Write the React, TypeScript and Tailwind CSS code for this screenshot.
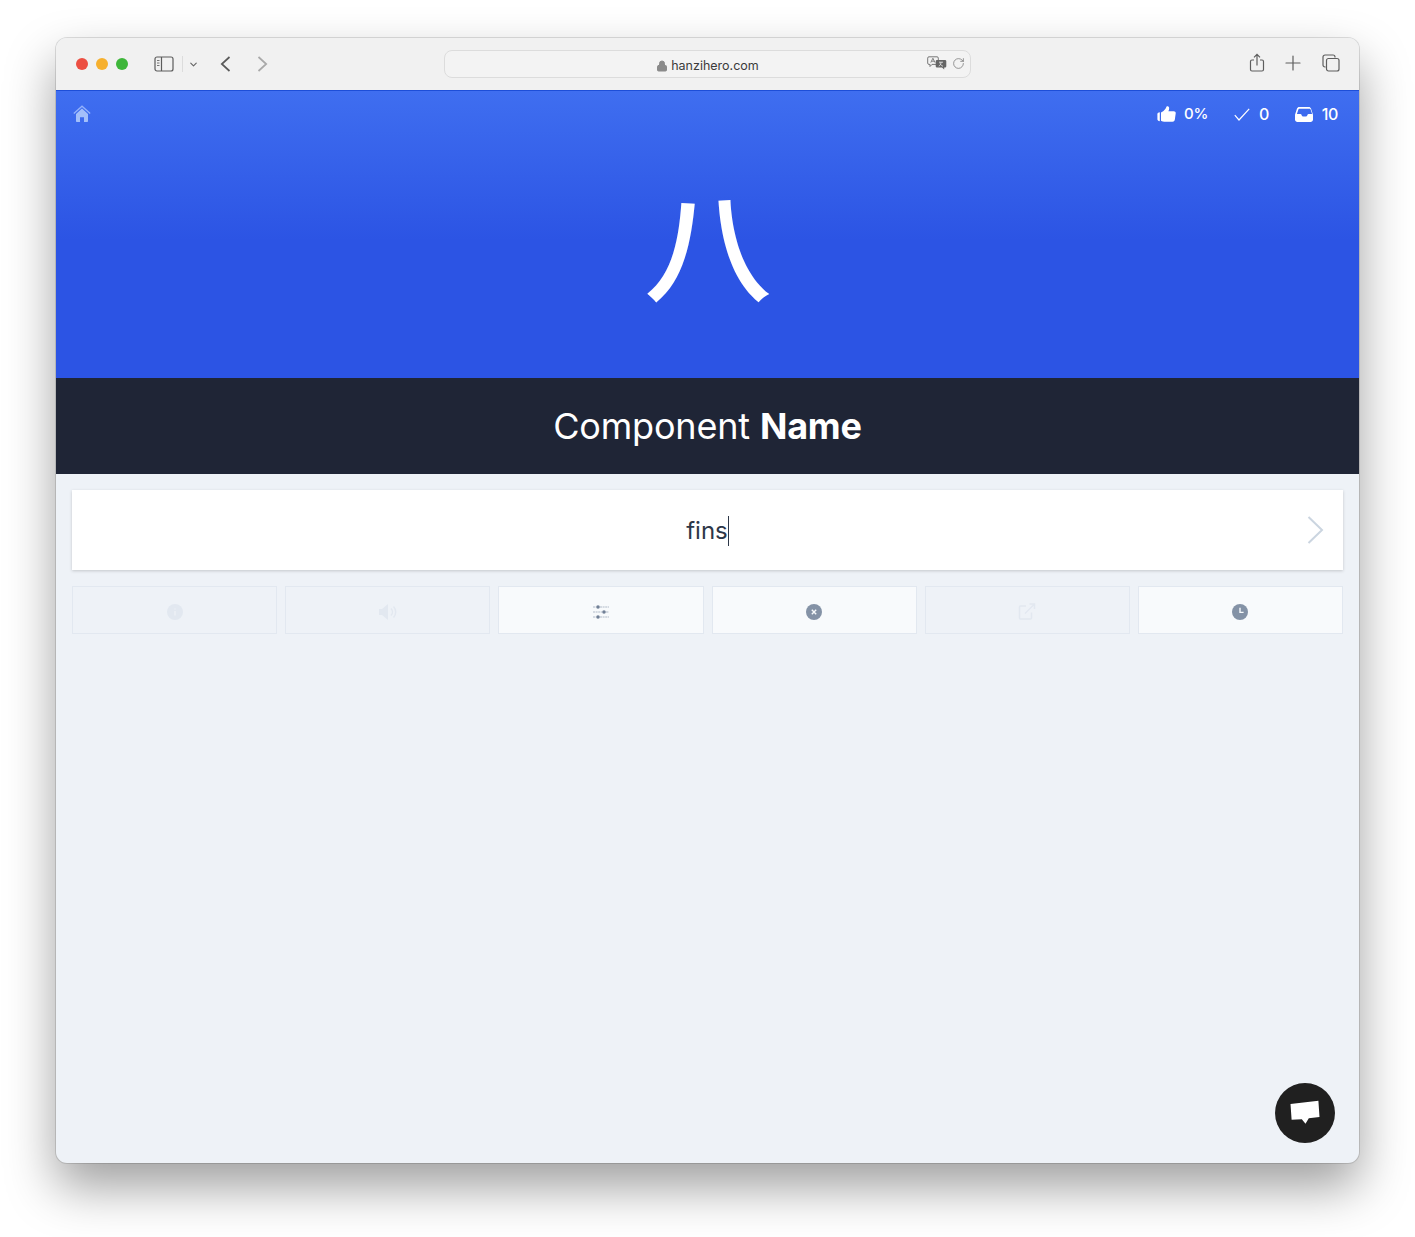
import { ChevronDown, Plus, RotateCw, Lock } from 'lucide-react';

const SANS = "font-['Inter','Noto_Sans_CJK_SC',sans-serif]";

function SidebarIcon() {
  return (
    <svg width="20" height="16" viewBox="0 0 20 16" fill="none" stroke="#5c5c5c" strokeWidth="1.2">
      <rect x="1" y="1" width="18" height="14" rx="2" />
      <path d="M7.5 1v14" />
      <path d="M3 4.5h2.5M3 7h2.5M3 9.5h2.5" strokeWidth="1.1" stroke="#777" />
    </svg>
  );
}

function NavChevron({ dir, color }: { dir: 'left' | 'right'; color: string }) {
  return (
    <svg width="11" height="16" viewBox="0 0 11 16" fill="none" stroke={color} strokeWidth="1.7">
      <path d={dir === 'left' ? 'M9.500 1 1.800 8l7.700 7' : 'M1.500 1l7.700 7-7.700 7'} />
    </svg>
  );
}

function ShareIcon() {
  return (
    <svg width="16" height="20" viewBox="0 0 16 20" fill="none" stroke="#5e5e5e" strokeWidth="1.2">
      <path d="M5 7H3a1.5 1.5 0 0 0-1.5 1.5v8A1.5 1.5 0 0 0 3 18h10a1.5 1.5 0 0 0 1.5-1.5v-8A1.5 1.5 0 0 0 13 7h-2" />
      <path d="M8 12.5V1.5M5 4.3l3-3 3 3" />
    </svg>
  );
}

function TabsIcon() {
  return (
    <svg width="18" height="18" viewBox="0 0 18 18" fill="none" stroke="#5e5e5e" strokeWidth="1.2">
      <path d="M3.6 13H3a2 2 0 0 1-2-2V3a2 2 0 0 1 2-2h8a2 2 0 0 1 2 2v.6" />
      <rect x="4.5" y="4.5" width="12.5" height="12.5" rx="2" />
    </svg>
  );
}

function TranslateIcon() {
  return (
    <svg width="20" height="14" viewBox="0 0 20 14">
      <path d="M2 .8h8a1.3 1.3 0 0 1 1.3 1.3v5A1.3 1.3 0 0 1 10 8.400H5L3 10.500V8.400H2A1.300 1.300 0 0 1 .7 7.100v-5A1.300 1.300 0 0 1 2 .8z" fill="none" stroke="#777" strokeWidth="1" />
      <path d="M3.800 6.600 5.900 2.200 8 6.600M4.600 5.200h2.600" fill="none" stroke="#777" strokeWidth="0.9" />
      <path d="M10 4h8a1.300 1.300 0 0 1 1.300 1.300v5a1.300 1.300 0 0 1-1.300 1.300h-.8v2l-2.200-2h-5a1.300 1.300 0 0 1-1.300-1.300v-5A1.300 1.300 0 0 1 10 4z" fill="#666" />
      <path d="M12 6.200h4M14 6.200c0 2-1 3.400-2.200 3.900M13 7.500c.6 1.300 1.800 2.300 3 2.700" fill="none" stroke="#f0f0f0" strokeWidth="0.8" />
    </svg>
  );
}

function HomeIcon() {
  return (
    <svg width="18" height="18" viewBox="0 0 18 18">
      <path d="M.8 8.600 9 1.200l8.200 7.400" fill="none" stroke="#93b1fb" strokeWidth="1.300" />
      <path d="M3 9 9 3.600 15 9v7.200a.8.8 0 0 1-.8.8h-3.200v-4.800H7V17H3.800a.8.8 0 0 1-.8-.8z" fill="#a3bffa" />
    </svg>
  );
}

function ThumbIcon() {
  return (
    <svg width="19" height="16" viewBox="0 0 19 16" fill="#fff">
      <path d="M.4 8.200c0-.9.600-1.500 1.400-1.700l1-.2v8.900l-1-.2C1 14.800.4 14.200.4 13.300z" />
      <path d="M4 6.400c1.700-.7 3.500-2.200 4.500-3.700.6-.9.700-1.600 1.100-2.200.6-.7 2-.4 2.400.8.400 1.200 0 2.700-.6 4h5.400c1.300 0 2.100 1 1.900 2.200l-.9 6.200c-.2 1.200-1.100 2-2.300 2H8.300c-1.700 0-3-.4-4.300-1z" />
    </svg>
  );
}

function CheckIcon() {
  return (
    <svg width="16" height="13" viewBox="0 0 16 13" fill="none" stroke="#fff" strokeWidth="1.200">
      <path d="M.8 7.200 5 12 15.200.8" />
    </svg>
  );
}

function InboxIcon() {
  return (
    <svg width="18" height="15" viewBox="0 0 18 15" fill="#fff">
      <path fillRule="evenodd" d="M4.200 0h9.600c1 0 1.800.6 2.200 1.500l1.600 5c.2.500.4 1.100.4 1.700v4.300c0 1.400-1.100 2.500-2.500 2.500h-13C1.100 15 0 13.900 0 12.500V8.200c0-.6.100-1.200.4-1.700l1.600-5C2.400.6 3.200 0 4.200 0zm0 1.700c-.3 0-.6.200-.7.500L1.900 7.100h3.500c.5 0 .9.300 1.100.7l.4.900c.2.400.6.700 1.100.7h3c.5 0 .9-.3 1.100-.7l.4-.9c.2-.4.600-.7 1.100-.7h3.500l-1.600-4.900c-.1-.3-.4-.5-.7-.5z" />
    </svg>
  );
}

function InfoIcon() {
  return (
    <svg width="16" height="16" viewBox="0 0 16 16">
      <circle cx="8" cy="8" r="8" fill="#e2e8f0" />
      <path d="M8 7v4.500M8 4.500v1" stroke="#edf0f5" strokeWidth="1.500" />
    </svg>
  );
}

function VolumeIcon() {
  return (
    <svg width="20" height="18" viewBox="0 0 20 18">
      <path d="M1 6h3L10 1v16l-6-5H1z" fill="#e2e8f0" />
      <path d="M13 5.500a5 5 0 0 1 0 7M15.500 3.500a8 8 0 0 1 0 11" fill="none" stroke="#e2e8f0" strokeWidth="1.500" />
    </svg>
  );
}

function SlidersIcon() {
  return (
    <svg width="16" height="14" viewBox="0 0 16 14" stroke="#8492a6" strokeWidth="1.200">
      <path d="M0 2h3M7 2h9M0 7h9M13 7h3M0 12h3M7 12h9" strokeOpacity="0.6" strokeDasharray="2 .6" />
      <circle cx="5" cy="2" r="1.800" fill="#718096" stroke="none" />
      <circle cx="11" cy="7" r="1.800" fill="#718096" stroke="none" />
      <circle cx="5" cy="12" r="1.800" fill="#718096" stroke="none" />
    </svg>
  );
}

function CloseCircleIcon() {
  return (
    <svg width="16" height="16" viewBox="0 0 16 16">
      <circle cx="8" cy="8" r="8" fill="#8492a6" />
      <path d="M5.800 5.800l4.400 4.400M10.200 5.800l-4.400 4.400" stroke="#f7fafc" strokeWidth="1.400" />
    </svg>
  );
}

function ExternalIcon() {
  return (
    <svg width="18" height="17" viewBox="0 0 18 17" fill="none" stroke="#e2e8f0" strokeWidth="1.500">
      <path d="M8 3H2.500A1 1 0 0 0 1.500 4v11a1 1 0 0 0 1 1h10a1 1 0 0 0 1-1V9.500" />
      <path d="M7 10.500 16.500 1M11.500 1h5v5" />
    </svg>
  );
}

function ClockIcon() {
  return (
    <svg width="16" height="16" viewBox="0 0 16 16">
      <circle cx="8" cy="8" r="8" fill="#8492a6" />
      <path d="M8 3.800V8.400h3.600" fill="none" stroke="#f7fafc" strokeWidth="1.400" />
    </svg>
  );
}

function ChatIcon() {
  return (
    <svg width="30" height="26" viewBox="0 0 30 26" fill="#fff">
      <path d="M.5 4 28.400.8 29.500 17l-10.700 1.300-3.300 5.400-3.700-4.400-10.200.500z" />
    </svg>
  );
}

const actions = [
  { icon: <InfoIcon />, active: false },
  { icon: <VolumeIcon />, active: false },
  { icon: <SlidersIcon />, active: true },
  { icon: <CloseCircleIcon />, active: true },
  { icon: <ExternalIcon />, active: false },
  { icon: <ClockIcon />, active: true },
];

export default function App() {
  return (
    <div className={`h-[1237px] bg-white px-[56px] pt-[38px] ${SANS}`}>
      <div className="relative flex h-[1125px] flex-col overflow-hidden rounded-[11px] bg-[#eef2f7] shadow-[0_0_0_1px_rgba(0,0,0,0.12),0_24px_50px_rgba(0,0,0,0.38)]">
        {/* safari toolbar */}
        <div className="flex h-[53px] shrink-0 items-center border-b border-[#1d4ed8] bg-[#f1f1f1] pl-5 pr-[19px]">
          <div className="flex w-[52px] items-center gap-2">
            <span className="size-3 rounded-full bg-[#ec4f42]" />
            <span className="size-3 rounded-full bg-[#f6b02e]" />
            <span className="size-3 rounded-full bg-[#3eb63a]" />
          </div>
          <div className="ml-[26px] flex items-center">
            <SidebarIcon />
            <span className="ml-2 h-4 w-px bg-[#dcdcdc]" />
            <ChevronDown size={11} color="#666" strokeWidth={2.500} className="ml-[5px]" />
          </div>
          <div className="ml-[21px]">
            <NavChevron dir="left" color="#5a5a5a" />
          </div>
          <div className="ml-[26px]">
            <NavChevron dir="right" color="#a9a9a9" />
          </div>
          <div className="ml-[176px] relative flex h-[28px] w-[527px] items-center justify-center rounded-[8px] border border-[#dcdcdc] bg-[#f3f3f3] pt-[3px]">
            <Lock size={12} fill="#8a8a8a" color="#8a8a8a" className="mr-[3px]" />
            <span className="text-[12.5px] leading-4 text-[#3b3b3b]">hanzihero.com</span>
            <div className="absolute right-[5px] top-[5px] flex items-center gap-[5px]">
              <TranslateIcon />
              <RotateCw size={13} color="#808080" strokeWidth={1.500} />
            </div>
          </div>
          <div className="ml-auto mb-[2px] flex items-center gap-[16px]">
            <ShareIcon />
            <Plus size={24} color="#5e5e5e" strokeWidth={1.200} />
            <span className="ml-px"><TabsIcon /></span>
          </div>
        </div>

        {/* character */}
        <div className="flex h-[287px] shrink-0 flex-col bg-[linear-gradient(to_bottom,#3f6ef0_0%,#2c54e4_52%,#2c54e4_100%)] px-4 pt-[11px]">
          <div className="flex h-6 items-center justify-between pl-px pr-[5px] text-white">
            <HomeIcon />
            <div className="flex items-center text-base font-medium tracking-[-0.4px]">
              <ThumbIcon />
              <span className="ml-[8px] text-[15px]">0%</span>
              <span className="ml-[26px]"><CheckIcon /></span>
              <span className="ml-[9px]">0</span>
              <span className="ml-[26px]"><InboxIcon /></span>
              <span className="ml-[9px]">10</span>
            </div>
          </div>
          <div className="flex flex-1 items-start justify-center pt-[55px]">
            <span className="scale-x-[1.07] text-[120px] font-medium leading-none text-white font-['Noto_Sans_CJK_SC',sans-serif]">八</span>
          </div>
        </div>

        {/* title */}
        <div className="flex h-[96px] shrink-0 items-center justify-center bg-[#1f2536] text-[36px] tracking-[-0.18px] text-white">
          <span>Component <b className="font-bold">Name</b></span>
        </div>

        <div className="flex flex-col gap-4 p-4">
          <div className="relative flex h-[80px] items-center justify-center bg-white pt-px shadow-[0_1px_3px_rgba(0,0,0,0.18)]">
            <span className="border-r border-[#2d3748] text-2xl leading-[30px] text-[#2d3748]">fins</span>
            <svg width="17" height="28" viewBox="0 0 17 28" fill="none" stroke="#cbd5e0" strokeWidth="2" className="absolute right-[19px] top-[26px]">
              <path d="M1.500 1 15 14 1.500 27" />
            </svg>
          </div>
          <div className="grid grid-cols-6 gap-2">
            {actions.map((a, i) => (
              <div
                key={i}
                className={`flex h-[48px] items-center justify-center border border-[#e2e8f0] pt-[3px] ${a.active ? 'bg-[#f8fafc]' : 'bg-[#eef2f7]'}`}
              >
                {a.icon}
              </div>
            ))}
          </div>
        </div>

        {/* chat button */}
        <div className="absolute bottom-[20px] right-[24px] flex size-[60px] items-center justify-center rounded-full bg-[#202020]">
          <ChatIcon />
        </div>
      </div>
    </div>
  );
}
